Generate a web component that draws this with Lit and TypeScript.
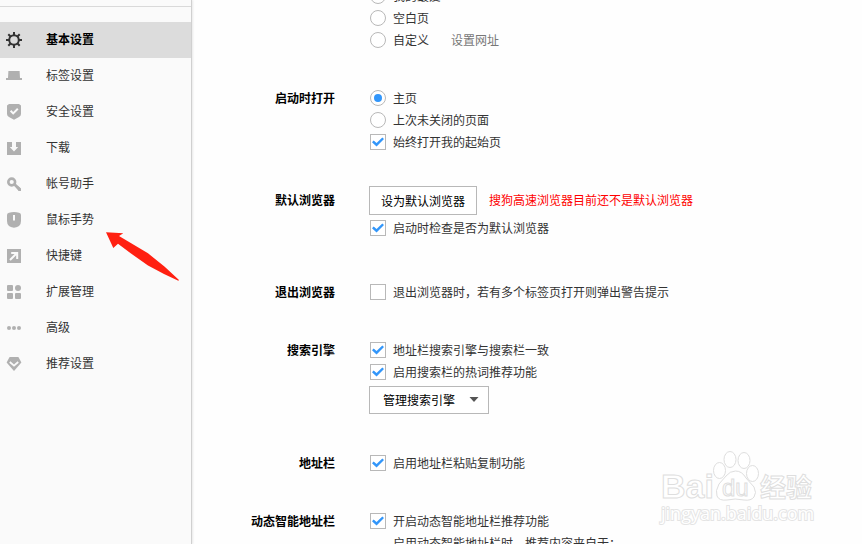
import { LitElement, html, svg, css, nothing, TemplateResult, SVGTemplateResult } from "lit";
import { customElement, property } from "lit/decorators.js";
import { classMap } from "lit/directives/class-map.js";

const icons: Record<string, SVGTemplateResult> = {
  gear: svg`<circle cx="8" cy="8" r="4.8" fill="none" stroke="currentColor" stroke-width="2"/>
    <path d="M8 0v3M8 13v3M0 8h3M13 8h3M2.3 2.3l2.2 2.2M11.5 11.5l2.2 2.2M2.3 13.7l2.2-2.2M11.5 4.5l2.2-2.2" stroke="currentColor" stroke-width="2" fill="none"/>`,
  tab: svg`<path d="M2.4 3h11.2l.4 7h2v2H0v-2h2z" fill="currentColor"/>`,
  shield: svg`<path d="M3 0h10l2 1.5V10q0 2-2 3l-5 2.7L3 13q-2-1-2-3V1.5z" fill="currentColor"/>
    <path d="M4.6 6.8L7.2 9.4l4.6-4.6" fill="none" stroke="#fafafa" stroke-width="2"/>`,
  download: svg`<path d="M1 2h5v5H3.8L8 11.6 12.2 7H10V2h5v13H1z" fill="currentColor"/>`,
  key: svg`<circle cx="5.7" cy="6" r="3.4" fill="none" stroke="currentColor" stroke-width="2.6"/>
    <path d="M8.3 8.3L14 13.6" stroke="currentColor" stroke-width="2.8" fill="none"/>
    <path d="M9.8 11.3l2-1.4 3.2 2.8V15h-2.4z" fill="currentColor"/>`,
  mouse: svg`<path d="M3 .8Q8-.7 13 .8q2 .6 2 2.2V9q0 6-7 6.8Q1 15 1 9V3Q1 1.4 3 .8z" fill="currentColor"/>
    <path d="M7 3h2v5.500H7z" fill="#fafafa"/>`,
  shortcut: svg`<path d="M1 1h14v14H1z" fill="currentColor"/>
    <path d="M4 12l6-6M5.2 4.9h6v6" fill="none" stroke="#fafafa" stroke-width="2"/>`,
  extension: svg`<rect x="1" y="1" width="6" height="6" rx="1" fill="currentColor"/>
    <circle cx="12" cy="4" r="3" fill="currentColor"/>
    <rect x="1" y="9" width="6" height="6" rx="1" fill="currentColor"/>
    <rect x="9" y="9" width="6" height="6" rx="1" fill="currentColor"/>`,
  more: svg`<circle cx="3" cy="8" r="2" fill="currentColor"/><circle cx="8" cy="8" r="2" fill="currentColor"/><circle cx="13" cy="8" r="2" fill="currentColor"/>`,
  diamond: svg`<path d="M3.6 1h8.8L15.4 6.5 8 15 .6 6.5z" fill="currentColor"/>
    <path d="M3.8 6L8 9.6 12.2 6" fill="none" stroke="#fafafa" stroke-width="1.8"/>`,
};

const navItems = [
  { icon: "gear", label: "基本设置" },
  { icon: "tab", label: "标签设置" },
  { icon: "shield", label: "安全设置" },
  { icon: "download", label: "下载" },
  { icon: "key", label: "帐号助手" },
  { icon: "mouse", label: "鼠标手势" },
  { icon: "shortcut", label: "快捷键" },
  { icon: "extension", label: "扩展管理" },
  { icon: "more", label: "高级" },
  { icon: "diamond", label: "推荐设置" },
];

@customElement("settings-nav")
export class SettingsNav extends LitElement {
  @property() active = "gear";

  static styles = css`
    :host { display: block; }
    .rule { height: 6px; border-bottom: 1px solid #d9d9d9; margin-bottom: 15px; }
    .item {
      display: flex; align-items: center; gap: 24px;
      height: 36px; padding-left: 6px;
      color: #333; text-decoration: none;
    }
    .item.active { background: #dcdcdc; color: #000; font-weight: bold; }
    .label { padding-bottom: 2px; }
    .icon { width: 16px; height: 16px; color: #b0b0b0; flex: none; }
    .active .icon { color: #333; }
  `;

  render() {
    return html`<nav>
      <div class="rule"></div>
      ${navItems.map((n) => html`
        <a href="#${n.icon}" class=${classMap({ item: true, active: n.icon === this.active })}>
          <svg class="icon" viewBox="0 0 16 16" aria-hidden="true">${icons[n.icon]}</svg>
          <span class="label">${n.label}</span>
        </a>`)}
    </nav>`;
  }
}

@customElement("app-root")
export class AppRoot extends LitElement {
  static styles = css`
    :host {
      display: flex; position: relative; height: 100vh; overflow: hidden;
      background: #fefefe; color: #333;
      font: 12px/22px "Noto Sans CJK SC", "Noto Sans", sans-serif;
    }
    .side {
      flex: none; width: 191px; background: #fafafa;
      border-right: 1px solid #d0d0d0; box-shadow: 1px 0 2px #e8e8e8;
    }
    .main { flex: 1; min-width: 0; display: flex; flex-direction: column; gap: 36px; margin-top: -15px; }
    .section { display: grid; grid-template-columns: 143px 1fr; column-gap: 34px; }
    .roomy { padding-bottom: 6px; }
    .title { margin: 0; font-size: 12px; line-height: 22px; font-weight: bold; color: #000; text-align: right; }
    .row { display: flex; align-items: center; height: 22px; padding-left: 1px; white-space: nowrap; }
    .option { display: flex; align-items: center; gap: 7px; }
    .box {
      appearance: none; box-sizing: border-box; flex: none; display: grid; place-content: center;
      width: 16px; height: 16px; margin: 0; border: 1px solid #b8b8b8; background: #fff;
    }
    .box[type="radio"] { border-radius: 50%; }
    .box:checked::before { content: ""; display: block; background: #3296fa; }
    .box[type="radio"]:checked::before { width: 8px; height: 8px; border-radius: 50%; }
    .box[type="checkbox"]:checked::before {
      width: 12px; height: 10px;
      clip-path: polygon(0 52%, 14% 34%, 38% 60%, 86% 4%, 100% 21%, 38% 96%);
    }
    .link { color: #777; text-decoration: none; margin-left: 22px; }
    .actions { display: flex; align-items: center; gap: 12px; margin: -3px 0 2px; white-space: nowrap; }
    .button {
      box-sizing: border-box; width: 108px; height: 29px; padding: 0;
      border: 1px solid #b8b8b8; background: #fff; color: #000; font: inherit;
    }
    .warning { color: #f00; padding-bottom: 2px; }
    .picker { position: relative; width: 120px; margin: 3px 0 2px; }
    .select {
      appearance: none; display: block; box-sizing: border-box; width: 100%; height: 28px; padding: 0 13px;
      border: 1px solid #b8b8b8; border-radius: 0; background: #fff; color: #000; font: inherit;
    }
    .caret { position: absolute; right: 10px; top: 11px; width: 10px; height: 5px; pointer-events: none; }
    .note { margin: 0; padding-left: 24px; white-space: nowrap; }
    .pointer { position: absolute; left: 104px; top: 231px; width: 78px; height: 52px; pointer-events: none; }
    .mark { position: absolute; right: 42px; bottom: 14px; width: 160px; height: 82px; pointer-events: none; overflow: visible; }
    .line { fill: #fff; stroke: #dedede; stroke-width: 1; }
    .latin { font: bold 34px "Liberation Sans", sans-serif; }
    .du { font: 24px "Liberation Sans", sans-serif; }
    .han { font: bold 26px "Noto Sans CJK SC", sans-serif; }
    .site { font: 18px "Open Sans", sans-serif; fill: #fff; stroke: #e4e4e4; stroke-width: 2; paint-order: stroke; }
  `;

  private option(type: "radio" | "checkbox", label: string, checked = false, group = "", extra: TemplateResult | typeof nothing = nothing) {
    return html`<div class="row">
      <label class="option"><input class="box" type=${type} name=${group || nothing} ?checked=${checked}><span>${label}</span></label>${extra}
    </div>`;
  }

  private section(title: string, body: TemplateResult, roomy = false) {
    return html`<section class=${classMap({ section: true, roomy })}>
      <h2 class="title">${title}</h2><div>${body}</div>
    </section>`;
  }

  render() {
    return html`
      <settings-nav class="side"></settings-nav>
      <main class="main">
        ${this.section("", html`
          ${this.option("radio", "我的最爱", false, "home")}
          ${this.option("radio", "空白页", false, "home")}
          ${this.option("radio", "自定义", false, "home", html`<a class="link" href="#home">设置网址</a>`)}`)}
        ${this.section("启动时打开", html`
          ${this.option("radio", "主页", true, "startup")}
          ${this.option("radio", "上次未关闭的页面", false, "startup")}
          ${this.option("checkbox", "始终打开我的起始页", true)}`)}
        ${this.section("默认浏览器", html`
          <div class="actions">
            <button class="button" type="button">设为默认浏览器</button>
            <span class="warning">搜狗高速浏览器目前还不是默认浏览器</span>
          </div>
          ${this.option("checkbox", "启动时检查是否为默认浏览器", true)}`, true)}
        ${this.section("退出浏览器", this.option("checkbox", "退出浏览器时，若有多个标签页打开则弹出警告提示"))}
        ${this.section("搜索引擎", html`
          ${this.option("checkbox", "地址栏搜索引擎与搜索栏一致", true)}
          ${this.option("checkbox", "启用搜索栏的热词推荐功能", true)}
          <div class="picker">
            <select class="select" aria-label="搜索引擎"><option>管理搜索引擎</option></select>
            <svg class="caret" viewBox="0 0 10 5" aria-hidden="true"><path d="M.5 0h9L5 5z" fill="#555"/></svg>
          </div>`)}
        ${this.section("地址栏", this.option("checkbox", "启用地址栏粘贴复制功能", true))}
        ${this.section("动态智能地址栏", html`
          ${this.option("checkbox", "开启动态智能地址栏推荐功能", true)}
          <p class="note">启用动态智能地址栏时，推荐内容来自于：</p>`)}
      </main>
      <svg class="pointer" viewBox="0 0 78 52" aria-hidden="true">
        <path d="M2 1.3L19.3 2.3 15 5 44 22.3 60.7 35.7 75 49 74.3 49.7 60 43 44 34.5 27 22.5 14 12.7 9.3 17z" fill="#ff2011"/>
      </svg>
      <svg class="mark" viewBox="0 0 160 82">
        <text class="line latin" x="1" y="50">Bai</text>
        <ellipse class="line" cx="59.5" cy="22.5" rx="6" ry="8"/>
        <ellipse class="line" cx="70" cy="11.5" rx="6" ry="8"/>
        <ellipse class="line" cx="84" cy="12.5" rx="6" ry="8"/>
        <ellipse class="line" cx="92.5" cy="25.5" rx="6" ry="8"/>
        <path class="line" d="M75.5 23Q82 23 86 30L94 39Q97 45 94 49T84 52Q75 50 67 52Q59 53 57 48T59 36L66 28Q70 23 75.5 23z"/>
        <text class="line du" x="62" y="48">du</text>
        <text class="line han" x="100" y="49">经验</text>
        <text class="site" x="1" y="72">jingyan.baidu.com</text>
      </svg>`;
  }
}
